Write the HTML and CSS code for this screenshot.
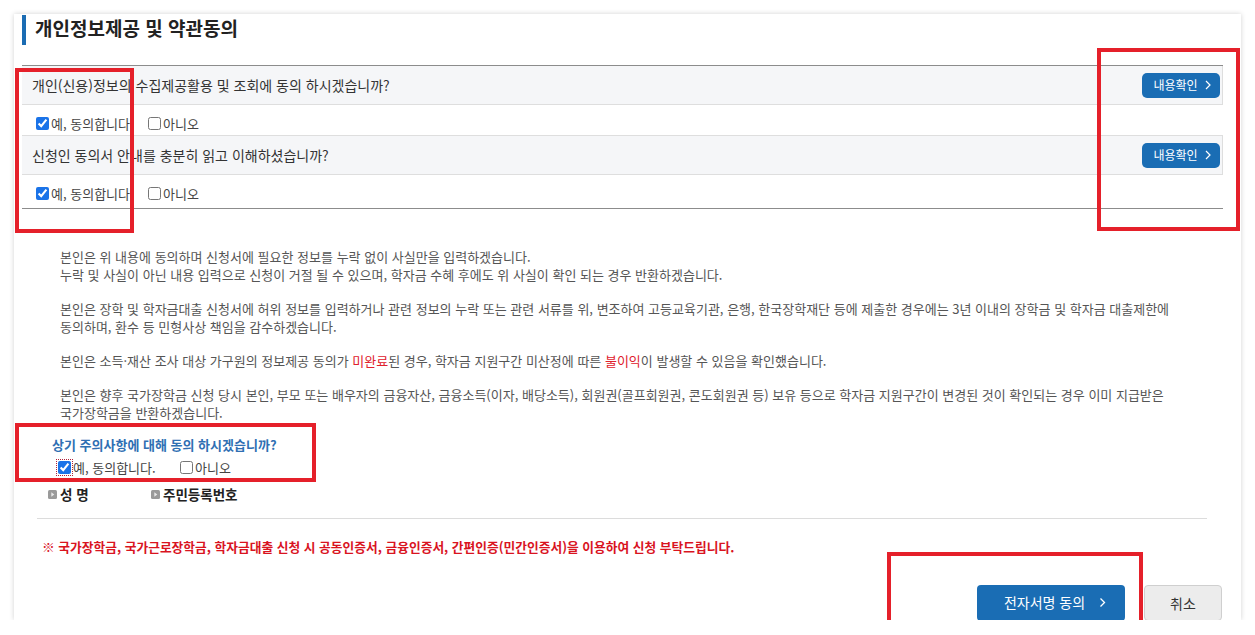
FILE: index.html
```html
<!DOCTYPE html>
<html lang="ko">
<head>
<meta charset="utf-8">
<title>개인정보제공 및 약관동의</title>
<link rel="stylesheet" href="styles.css">
</head>
<body>
<div class="card">
  <h2 class="title">개인정보제공 및 약관동의</h2>

  <div class="qtable">
    <div class="qrow">
      <span class="qtext">개인(신용)정보의 수집제공활용 및 조회에 동의 하시겠습니까?</span>
      <button class="btn-view">내용확인 <svg width="6" height="10" viewBox="0 0 6 10"><polyline points="1,1 5,5 1,9" fill="none" stroke="#fff" stroke-width="1.2"/></svg></button>
    </div>
    <div class="crow">
      <label class="chk"><input type="checkbox" checked> 예, 동의합니다</label>
      <label class="chk"><input type="checkbox"> 아니오</label>
    </div>
    <div class="qrow">
      <span class="qtext">신청인 동의서 안내를 충분히 읽고 이해하셨습니까?</span>
      <button class="btn-view">내용확인 <svg width="6" height="10" viewBox="0 0 6 10"><polyline points="1,1 5,5 1,9" fill="none" stroke="#fff" stroke-width="1.2"/></svg></button>
    </div>
    <div class="crow last">
      <label class="chk"><input type="checkbox" checked> 예, 동의합니다</label>
      <label class="chk"><input type="checkbox"> 아니오</label>
    </div>
  </div>

  <div class="notice">
    <p>본인은 위 내용에 동의하며 신청서에 필요한 정보를 누락 없이 사실만을 입력하겠습니다.<br>누락 및 사실이 아닌 내용 입력으로 신청이 거절 될 수 있으며, 학자금 수혜 후에도 위 사실이 확인 되는 경우 반환하겠습니다.</p>
    <p>본인은 장학 및 학자금대출 신청서에 허위 정보를 입력하거나 관련 정보의 누락 또는 관련 서류를 위, 변조하여 고등교육기관, 은행, 한국장학재단 등에 제출한 경우에는 3년 이내의 장학금 및 학자금 대출제한에<br>동의하며, 환수 등 민형사상 책임을 감수하겠습니다.</p>
    <p>본인은 소득·재산 조사 대상 가구원의 정보제공 동의가 <span class="red">미완료</span>된 경우, 학자금 지원구간 미산정에 따른 <span class="red">불이익</span>이 발생할 수 있음을 확인했습니다.</p>
    <p>본인은 향후 국가장학금 신청 당시 본인, 부모 또는 배우자의 금융자산, 금융소득(이자, 배당소득), 회원권(골프회원권, 콘도회원권 등) 보유 등으로 학자금 지원구간이 변경된 것이 확인되는 경우 이미 지급받은<br>국가장학금을 반환하겠습니다.</p>
  </div>

  <div class="agree">
    <div class="agree-q">상기 주의사항에 대해 동의 하시겠습니까?</div>
    <div class="agree-c">
      <label class="chk focus"><input type="checkbox" checked> 예, 동의합니다.</label>
      <label class="chk"><input type="checkbox"> 아니오</label>
    </div>
  </div>

  <div class="info">
    <span class="info-item name"><svg class="bullet" width="9" height="9" viewBox="0 0 9 9"><rect x="0" y="0" width="9" height="9" rx="1.5" fill="#9a9a9a"/><polygon points="3.3,2.3 6.3,4.5 3.3,6.7" fill="#e8e8e8"/></svg>성 명</span>
    <span class="info-item"><svg class="bullet" width="9" height="9" viewBox="0 0 9 9"><rect x="0" y="0" width="9" height="9" rx="1.5" fill="#9a9a9a"/><polygon points="3.3,2.3 6.3,4.5 3.3,6.7" fill="#e8e8e8"/></svg>주민등록번호</span>
  </div>

  <div class="warn">※ 국가장학금, 국가근로장학금, 학자금대출 신청 시 공동인증서, 금융인증서, 간편인증(민간인증서)을 이용하여 신청 부탁드립니다.</div>

  <div class="actions">
    <button class="btn-sign">전자서명 동의 <svg width="7" height="11" viewBox="0 0 7 11"><polyline points="1.5,1.5 5.5,5.5 1.5,9.5" fill="none" stroke="#fff" stroke-width="1.3"/></svg></button>
    <button class="btn-cancel">취소</button>
  </div>

  <div class="mark m1"></div>
  <div class="mark m2"></div>
  <div class="mark m3"></div>
  <div class="mark m4"></div>
</div>
</body>
</html>
```

FILE: styles.css
```css
* { box-sizing: border-box; }
html, body { margin: 0; padding: 0; background: #fff; }
body {
  font-family: "Noto Sans CJK KR", "Noto Sans", "Liberation Sans", sans-serif;
  color: #333;
  overflow: hidden;
}
.card {
  position: relative;
  margin: 14px 0 0 14px;
  width: 1227px;
  height: 606px;
  overflow: hidden;
  background: #fff;
  box-shadow: 0 0 5px rgba(0,0,0,0.18);
  padding: 1px 18px 0 8px;
}
.title {
  margin: 0;
  height: 30px;
  border-left: 4px solid #1b6cb3;
  padding-left: 9px;
  font-size: 19px;
  font-weight: bold;
  line-height: 26px;
  color: #222;
}
.qtable {
  margin-top: 20px;
  border-top: 1px solid #8c8c8c;
  border-bottom: 1px solid #8c8c8c;
}
.qrow {
  display: flex;
  align-items: center;
  justify-content: space-between;
  height: 39px;
  background: #f5f6f8;
  border-bottom: 1px solid #dedede;
  border-right: 1px solid #dedede;
  padding: 0 2px 0 10px;
}
.qtext { font-size: 14px; color: #333; }
.btn-view {
  display: flex;
  align-items: center;
  justify-content: center;
  gap: 7px;
  width: 78px;
  height: 25px;
  border: 0;
  border-radius: 5px;
  background: #1a6db4;
  color: #fff;
  font-family: inherit;
  font-size: 12px;
  padding: 0 0 1px 2px;
}
.crow {
  display: flex;
  align-items: center;
  height: 31px;
  padding: 6px 0 0 14px;
  border-bottom: 1px solid #dedede;
}
.crow.last { height: 33px; border-bottom: 0; padding-top: 4px; }
.chk {
  display: inline-flex;
  align-items: center;
  font-size: 13px;
  color: #444;
  margin-right: 16px;
  gap: 2px;
}
.crow .chk:first-child { width: 96px; margin-right: 16px; }
.chk input {
  width: 13px;
  height: 13px;
  margin: 0;
  accent-color: #1a73e8;
}
.notice {
  padding: 39px 0 0 38px;
  font-size: 13px;
  line-height: 18px;
  color: #555;
}
.notice p { margin: 0 0 16px 0; }
.notice p:last-child { margin-bottom: 0; }
.red { color: #e0202c; }
.agree { padding: 14px 0 0 30px; }
.agree-q {
  font-size: 13px;
  font-weight: bold;
  color: #2f6fb3;
  line-height: 18px;
}
.agree-c {
  display: flex;
  align-items: center;
  height: 22px;
  margin-top: 2px;
  padding-left: 6px;
}
.agree-c .chk:first-child { width: 110px; margin-right: 12px; }
.chk.focus input { outline: 1px dotted #b0223a; outline-offset: 1px; }
.info {
  display: flex;
  align-items: center;
  height: 26px;
  padding: 6px 0 0 26px;
  font-size: 13.5px;
  font-weight: bold;
  color: #222;
}
.info-item { display: inline-flex; align-items: center; gap: 3px; }
.info-item.name { width: 103px; }
.bullet { flex: none; }
.warn {
  margin: 14px 16px 0 15px;
  border-top: 1px solid #dcdcdc;
  padding: 19px 0 0 5px;
  font-size: 12.75px;
  font-weight: bold;
  line-height: 18px;
  color: #d9141f;
}
.actions {
  display: flex;
  justify-content: flex-end;
  gap: 19px;
  margin-top: 29px;
  padding-right: 1px;
}
.btn-sign {
  display: flex;
  align-items: center;
  justify-content: center;
  gap: 14px;
  width: 148px;
  height: 36px;
  border: 0;
  border-radius: 4px;
  background: #1a6db4;
  color: #fff;
  font-family: inherit;
  font-size: 14px;
  padding: 0 0 2px 8px;
}
.btn-cancel {
  width: 78px;
  height: 36px;
  border: 1px solid #cfcfcf;
  border-radius: 4px;
  background: #ececec;
  color: #333;
  font-family: inherit;
  font-size: 14px;
  padding-bottom: 2px;
}
.mark {
  position: absolute;
  border: 4px solid #e5202a;
}
.m1 { left: 1px; top: 54px; width: 119px; height: 165px; }
.m2 { left: 1083px; top: 34px; width: 143px; height: 183px; }
.m3 { left: 1px; top: 409px; width: 301px; height: 59px; }
.m4 { left: 873px; top: 538px; width: 256px; height: 100px; }
```
